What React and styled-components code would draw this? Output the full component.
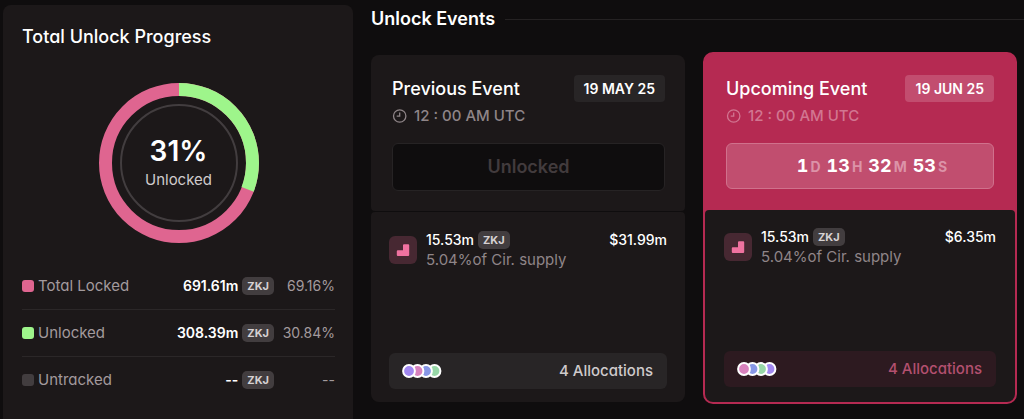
import React from "react";
import styled, { createGlobalStyle } from "styled-components";

const GlobalStyle = createGlobalStyle`
  * {
    box-sizing: border-box;
  }
  body {
    margin: 0;
    background-color: #0f0d0e;
    color: #ffffff;
    font-family: Inter, "Liberation Sans", sans-serif;
    font-feature-settings: "cv11";
    font-size: 15px;
    line-height: 20px;
  }
`;

const Page = styled.main`
  display: flex;
  gap: 18px;
  min-height: 100vh;
  padding: 5px 0 0 3px;
  overflow: hidden;
`;

const Progress = styled.section`
  flex: 0 0 350px;
  padding: 20px 18px 14px 19px;
  border-radius: 8px 8px 0 0;
  background-color: #1c1819;
`;

const PanelTitle = styled.h2`
  margin: 0;
  font-size: 18px;
  font-weight: 500;
  line-height: 24px;
`;

const Donut = styled.div`
  display: grid;
  place-items: center;
  margin: 34px 0 19px;
  > * {
    grid-area: 1 / 1;
  }
`;

const DonutText = styled.div`
  padding-bottom: 5px;
  text-align: center;
  color: #cfcbcc;
`;

const Percent = styled.div`
  font-size: 28px;
  font-weight: 600;
  line-height: 38px;
  color: #ffffff;
`;

const Legend = styled.ul`
  margin: 0;
  padding: 0;
  list-style: none;
`;

const LegendRow = styled.li`
  display: flex;
  align-items: center;
  height: 47px;
  & + & {
    border-top: 1px solid #2b2728;
  }
`;

const Swatch = styled.span`
  width: 12px;
  height: 12px;
  margin-right: 4px;
  border-radius: 3px;
  background-color: ${(props) => props.$color};
`;

const LegendLabel = styled.span`
  flex: 1;
  color: #a39a9d;
`;

const Amount = styled.span`
  margin-right: 4px;
  font-size: 14px;
  font-weight: ${(props) => (props.$strong ? 600 : 500)};
`;

const Token = styled.span`
  padding: 0 5px;
  border-radius: 5px;
  background-color: #423d3f;
  color: #d6d1d3;
  font-size: 11px;
  font-weight: 700;
  line-height: 18px;
`;

const Share = styled.span`
  width: 61px;
  font-size: 14px;
  text-align: right;
  color: #a39a9d;
`;

const Events = styled.section`
  flex: 1;
  min-width: 0;
`;

const EventsHeader = styled.header`
  display: flex;
  align-items: center;
  gap: 10px;
  padding-top: 2px;
  &::after {
    content: "";
    flex: 1;
    height: 1px;
    background-color: #252223;
  }
`;

const EventsTitle = styled(PanelTitle)`
  font-weight: 600;
`;

const Cards = styled.div`
  display: grid;
  grid-template-columns: 1fr 1fr;
  align-items: end;
  gap: 18px;
  padding: 21px 7px 15px 0;
`;

const Card = styled.article`
  display: flex;
  flex-direction: column;
  gap: ${(props) => (props.$active ? 0 : 1)}px;
  margin-bottom: ${(props) => (props.$active ? 0 : 2)}px;
  border: ${(props) => (props.$active ? "2px solid #b52a52" : "none")};
  border-radius: 10px;
  background-color: ${(props) => (props.$active ? "#b52a52" : "transparent")};
`;

const CardTop = styled.div`
  padding: ${(props) => (props.$active ? "21px" : "20px 20px 20px 21px")};
  border-radius: 8px 8px 4px 4px;
  background-color: ${(props) => (props.$active ? "transparent" : "#1c1819")};
`;

const CardHeading = styled.div`
  display: flex;
  align-items: center;
  justify-content: space-between;
`;

const CardTitle = styled.h3`
  margin: 0;
  font-size: 18px;
  font-weight: 500;
  line-height: 24px;
`;

const DateChip = styled.time`
  padding: 0 10px;
  border-radius: 4px;
  background-color: ${(props) => (props.$active ? "#c24d6f" : "#282526")};
  font-size: 14px;
  font-weight: 600;
  line-height: 27px;
`;

const Hour = styled.div`
  display: flex;
  align-items: center;
  gap: 7px;
  margin: 4px 0 17px;
  color: ${(props) => (props.$active ? "#d27691" : "#8f8588")};
  font-weight: 500;
`;

const Status = styled.div`
  display: flex;
  align-items: center;
  justify-content: center;
  height: ${(props) => (props.$active ? 46 : 48)}px;
  border: 1px solid ${(props) => (props.$active ? "#d0718c" : "#262324")};
  border-radius: 6px;
  background-color: ${(props) => (props.$active ? "#c14e6f" : "#0f0d0e")};
  color: #423b3d;
  font-size: 18px;
  font-weight: 600;
`;

const Countdown = styled.div`
  display: flex;
  align-items: baseline;
  gap: 6px;
  padding-left: 24px;
  color: #ffffff;
  font-weight: 700;
  font-variant-numeric: tabular-nums;
`;

const Unit = styled.span`
  margin-left: 2px;
  color: #dc93a8;
  font-size: 14px;
`;

const CardBody = styled.div`
  display: flex;
  flex-direction: column;
  justify-content: space-between;
  height: ${(props) => (props.$active ? 192 : 190)}px;
  padding: ${(props) => (props.$active ? "17px 19px 15px" : "18px 18px 13px")};
  border-radius: 4px 4px 8px 8px;
  background-color: #1c1819;
`;

const Allocation = styled.div`
  display: flex;
  align-items: center;
  gap: 9px;
`;

const AllocationText = styled.div`
  flex: 1;
`;

const AllocationLine = styled.div`
  display: flex;
  align-items: center;
  font-weight: 500;
`;

const Price = styled.span`
  margin-left: auto;
  font-size: 14px;
`;

const Supply = styled.div`
  color: #8f8588;
`;

const AllocationsButton = styled.button`
  display: flex;
  align-items: center;
  justify-content: space-between;
  width: 100%;
  height: 36px;
  padding: 0 14px 0 13px;
  border: none;
  border-radius: 6px;
  background-color: ${(props) => (props.$active ? "#2d1a20" : "#282526")};
  color: ${(props) => (props.$active ? "#b3506f" : "#cfcbcc")};
  font: inherit;
  font-feature-settings: inherit;
  font-weight: 500;
  cursor: pointer;
`;

const legend = [
  { label: "Total Locked", color: "#df6590", amount: "691.61m", share: "69.16%" },
  { label: "Unlocked", color: "#9ef58b", amount: "308.39m", share: "30.84%" },
  { label: "Untracked", color: "#423d3f", amount: "--", share: "--" },
];

const events = [
  {
    title: "Previous Event",
    date: "19 MAY 25",
    price: "$31.99m",
    dots: ["#a188f0", "#d882bd", "#8797e6", "#98d8a8"],
  },
  {
    title: "Upcoming Event",
    date: "19 JUN 25",
    price: "$6.35m",
    dots: ["#d882bd", "#8797e6", "#98d8a8", "#a188f0"],
    active: true,
    countdown: [["1", "D"], ["13", "H"], ["32", "M"], ["53", "S"]],
  },
];

const DonutChart = ({ value }) => (
  <svg width="160" height="160" viewBox="0 0 160 160" fill="none">
    <circle cx="80" cy="80" r="73.5" stroke="#df6590" strokeWidth="13" />
    <circle
      cx="80"
      cy="80"
      r="73.5"
      stroke="#9ef58b"
      strokeWidth="13"
      pathLength="100"
      strokeDasharray={`${value} 100`}
      transform="rotate(-90 80 80)"
    />
    <circle cx="80" cy="80" r="58" stroke="#423d3f" strokeWidth="2" />
  </svg>
);

const ClockIcon = () => (
  <svg width="15" height="14" viewBox="0 0 15 14" fill="none" stroke="currentColor" strokeWidth="1.3">
    <circle cx="7.7" cy="7" r="6.2" />
    <path d="M7.7 3.4V7.2H4.7" />
  </svg>
);

const StepIcon = () => (
  <svg width="28" height="28" viewBox="0 0 28 28">
    <rect width="28" height="28" rx="6" fill="#472832" />
    <path
      d="M14 9.2a1 1 0 0 1 1-1h4.2a1 1 0 0 1 1 1V19a1 1 0 0 1-1 1H8.8a1 1 0 0 1-1-1v-3.8a1 1 0 0 1 1-1H14Z"
      fill="#f072a0"
    />
  </svg>
);

const Dots = ({ colors }) => (
  <svg width="40" height="14" viewBox="0 0 40 14">
    {colors
      .map((color, i) => (
        <circle key={color} cx={7 + i * 8.5} cy="7" r="5.9" fill={color} stroke="#ffffff" strokeWidth="2" />
      ))
      .reverse()}
  </svg>
);

const EventCard = ({ event }) => (
  <Card $active={event.active}>
    <CardTop $active={event.active}>
      <CardHeading>
        <CardTitle>{event.title}</CardTitle>
        <DateChip $active={event.active}>{event.date}</DateChip>
      </CardHeading>
      <Hour $active={event.active}>
        <ClockIcon />
        12 : 00 AM UTC
      </Hour>
      <Status $active={event.active}>
        {event.countdown ? (
          <Countdown>
            {event.countdown.map(([value, unit]) => (
              <span key={unit}>
                {value}
                <Unit>{unit}</Unit>
              </span>
            ))}
          </Countdown>
        ) : (
          "Unlocked"
        )}
      </Status>
    </CardTop>
    <CardBody $active={event.active}>
      <Allocation>
        <StepIcon />
        <AllocationText>
          <AllocationLine>
            <Amount>15.53m</Amount>
            <Token>ZKJ</Token>
            <Price>{event.price}</Price>
          </AllocationLine>
          <Supply>5.04%of Cir. supply</Supply>
        </AllocationText>
      </Allocation>
      <AllocationsButton type="button" $active={event.active}>
        <Dots colors={event.dots} />
        4 Allocations
      </AllocationsButton>
    </CardBody>
  </Card>
);

const App = () => {
  return (
    <>
      <GlobalStyle />
      <Page>
        <Progress>
          <PanelTitle>Total Unlock Progress</PanelTitle>
          <Donut>
            <DonutChart value={30.84} />
            <DonutText>
              <Percent>31%</Percent>
              Unlocked
            </DonutText>
          </Donut>
          <Legend>
            {legend.map((row) => (
              <LegendRow key={row.label}>
                <Swatch $color={row.color} />
                <LegendLabel>{row.label}</LegendLabel>
                <Amount $strong>{row.amount}</Amount>
                <Token>ZKJ</Token>
                <Share>{row.share}</Share>
              </LegendRow>
            ))}
          </Legend>
        </Progress>
        <Events>
          <EventsHeader>
            <EventsTitle>Unlock Events</EventsTitle>
          </EventsHeader>
          <Cards>
            {events.map((event) => (
              <EventCard key={event.title} event={event} />
            ))}
          </Cards>
        </Events>
      </Page>
    </>
  );
};

export default App;
